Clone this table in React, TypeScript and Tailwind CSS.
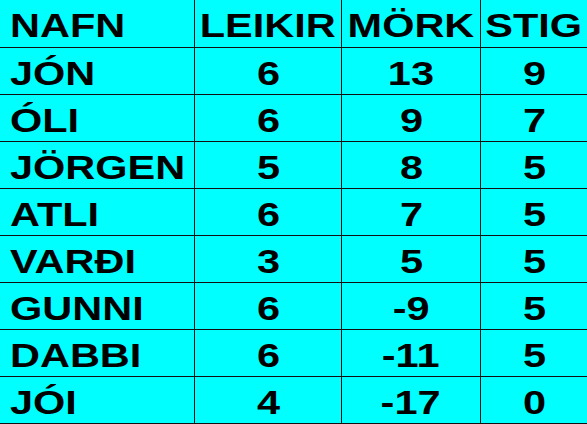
const rows = [
  { name: 'JÓN', leikir: '6', mork: '13', stig: '9' },
  { name: 'ÓLI', leikir: '6', mork: '9', stig: '7' },
  { name: 'JÖRGEN', leikir: '5', mork: '8', stig: '5' },
  { name: 'ATLI', leikir: '6', mork: '7', stig: '5' },
  { name: 'VARÐI', leikir: '3', mork: '5', stig: '5' },
  { name: 'GUNNI', leikir: '6', mork: '-9', stig: '5' },
  { name: 'DABBI', leikir: '6', mork: '-11', stig: '5' },
  { name: 'JÓI', leikir: '4', mork: '-17', stig: '0' },
];

function Cell({ children, left, last }: { children: React.ReactNode; left?: boolean; last?: boolean }) {
  return (
    <div
      className={
        'flex items-center border-b border-[#111] pt-[3px] ' +
        (last ? '' : 'border-r ') +
        (left ? 'justify-start pl-[10px]' : 'justify-center')
      }
    >
      <span
        className={
          'inline-block whitespace-nowrap leading-none scale-x-[1.22] ' +
          (left ? 'origin-left' : 'origin-center')
        }
      >
        {children}
      </span>
    </div>
  );
}

export default function App() {
  return (
    <div className="w-[587px] h-[424px] overflow-hidden bg-[#00ffff] text-black font-bold text-[34px] font-['Liberation_Sans',Arial,sans-serif]">
      <div className="grid grid-cols-[195px_147px_139px_1fr] grid-rows-[48px_repeat(8,47px)]">
        <Cell left>NAFN</Cell>
        <Cell>LEIKIR</Cell>
        <Cell>MÖRK</Cell>
        <Cell last>STIG</Cell>
        {rows.map((r) => (
          <>
            <Cell left key={r.name + 'n'}>{r.name}</Cell>
            <Cell key={r.name + 'l'}>{r.leikir}</Cell>
            <Cell key={r.name + 'm'}>{r.mork}</Cell>
            <Cell last key={r.name + 's'}>{r.stig}</Cell>
          </>
        ))}
      </div>
    </div>
  );
}
